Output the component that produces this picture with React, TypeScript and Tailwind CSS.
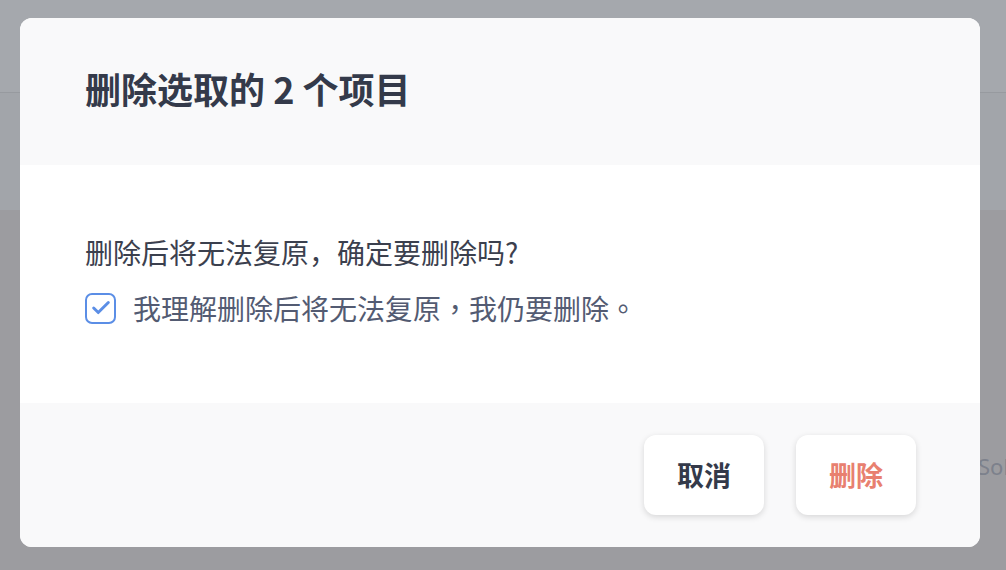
import { Check } from "lucide-react";

const cjk = "font-['Noto_Sans_CJK_SC','Noto_Sans',sans-serif]";

function Backdrop() {
  return (
    <div className="flex h-full w-full flex-col">
      <div className="h-[93px] shrink-0 border-b border-[#979a9f] bg-[#a5a8ad]" />
      <div className="h-[117px] shrink-0 bg-[#a2a5aa]" />
      <div className="flex-1 bg-[#9c9ca0]">
        <span className="absolute left-[978px] top-[450px] font-['Noto_Sans',sans-serif] text-[22px] text-[#7d818c]">
          Sol
        </span>
      </div>
    </div>
  );
}

export default function App() {
  return (
    <div className={`relative h-[570px] w-[1006px] overflow-hidden ${cjk}`}>
      <Backdrop />

      <div className="absolute left-[20px] top-[18px] flex h-[529px] w-[960px] flex-col overflow-hidden rounded-[12px] bg-white">
        <div className="flex h-[147px] items-center bg-[#f9f9fa] px-[65px] pb-[8px]">
          <h2 className="text-[36px] font-bold leading-none text-[#343a4a]">
            删除选取的 2 个项目
          </h2>
        </div>

        <div className="flex h-[238px] flex-col gap-[20px] px-[65px] pt-[69px]">
          <p className="text-[28px] leading-[36px] text-[#3b404e]">
            删除后将无法复原，确定要删除吗?
          </p>
          <label className="flex items-center gap-[17px]">
            <span className="flex h-[31px] w-[31px] items-center justify-center rounded-[7px] border-2 border-[#5b8ee6] bg-white">
              <Check className="h-[22px] w-[22px] text-[#5b8ee6]" strokeWidth={3.2} />
            </span>
            <span className="font-['Noto_Sans_CJK_TC','Noto_Sans_CJK_SC',sans-serif] text-[28px] leading-[36px] text-[#535b72]">
              我理解删除后将无法复原，我仍要删除。
            </span>
          </label>
        </div>

        <div className="flex flex-1 items-center justify-end gap-[32px] bg-[#f9f9fa] px-[64px]">
          <button className="flex h-[80px] w-[120px] items-center justify-center rounded-[12px] bg-white text-[27px] font-bold text-[#343a4a] shadow-[0_2px_6px_rgba(0,0,0,0.14)]">
            取消
          </button>
          <button className="flex h-[80px] w-[120px] items-center justify-center rounded-[12px] bg-white text-[27px] font-bold text-[#e8806f] shadow-[0_2px_6px_rgba(0,0,0,0.14)]">
            删除
          </button>
        </div>
      </div>
    </div>
  );
}
